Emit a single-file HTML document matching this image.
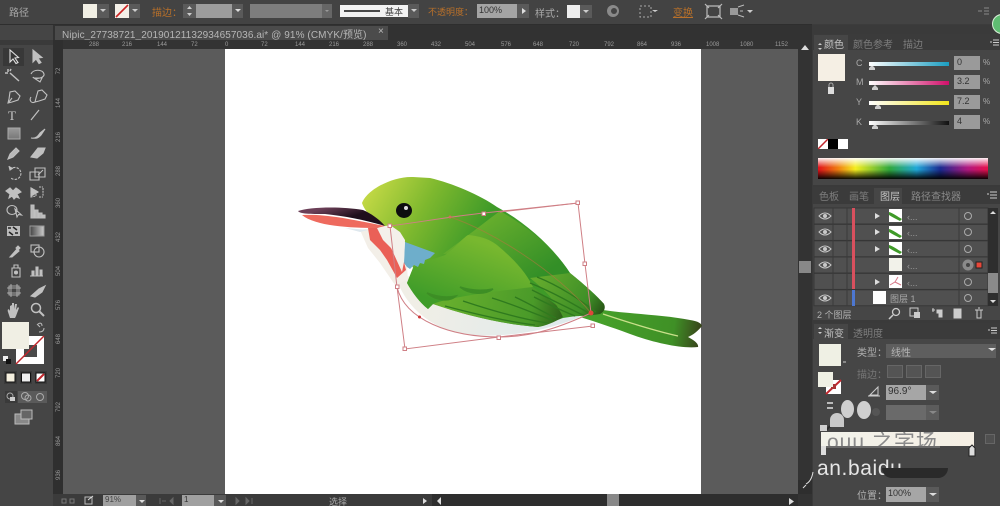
<!DOCTYPE html>
<html><head><meta charset="utf-8">
<style>
html,body{margin:0;padding:0;background:#3c3c3c}
#p{position:relative;width:1000px;height:506px;overflow:hidden;background:#3c3c3c;font-family:"Liberation Sans","Noto Sans CJK SC",sans-serif;font-size:10px;color:#b0b0b0;filter:blur(.35px)}
#p div{position:absolute;box-sizing:border-box}
#p span{position:absolute;white-space:nowrap}
.o{color:#b8702a}
.f{background:#9a9a9a;color:#333}
.rl{color:#9a9a9a;font-size:6px;top:42px}
.vr{position:absolute;color:#999;font-size:6px;left:54px;transform:rotate(-90deg);transform-origin:center;width:10px;text-align:center}
</style></head><body><div id="p">

<!-- top bar -->
<div style="left:0;top:0;width:1000px;height:24px;background:#434343"></div>
<span style="left:9px;top:4px;font-size:10px;color:#a8a8a8">路径</span>
<div style="left:83px;top:4px;width:14px;height:14px;background:#f1efe4"></div>
<div style="left:97px;top:4px;width:12px;height:14px;background:#5a5a5a"></div>
<svg style="position:absolute;left:0;top:0" width="1000" height="24">
<path d="M100 9l3 3 3-3z" fill="#ccc"/>
<rect x="115" y="4" width="14" height="14" fill="#f4f0e8"/><path d="M116 17L128 5" stroke="#c22" stroke-width="1.6"/>
<rect x="129" y="4" width="11" height="14" fill="#5a5a5a"/><path d="M132 9l3 3 3-3z" fill="#ccc"/>
<rect x="183" y="4" width="13" height="14" fill="#5a5a5a"/><path d="M187 9l2.500-3 2.500 3zM187 13l2.500 3 2.500-3z" fill="#ccc"/>
<rect x="196" y="4" width="36" height="14" fill="#9c9c9c"/><rect x="232" y="4" width="11" height="14" fill="#5a5a5a"/><path d="M235 9l3 3 3-3z" fill="#ddd"/>
<rect x="250" y="4" width="72" height="14" fill="#7d7d7d"/><rect x="322" y="4" width="10" height="14" fill="#666"/><path d="M325 10l2 2 2-2z" fill="#999"/>
<rect x="340" y="5" width="68" height="12" fill="#f2f2f2"/><path d="M344 11h36" stroke="#111" stroke-width="1.600"/>
<rect x="408" y="4" width="11" height="14" fill="#5a5a5a"/><path d="M411 9l3 3 3-3z" fill="#ccc"/>
<rect x="477" y="4" width="40" height="14" fill="#a4a4a4"/><rect x="517" y="4" width="12" height="14" fill="#5a5a5a"/><path d="M522 8l4 3-4 3z" fill="#ddd"/>
<rect x="567" y="5" width="13" height="13" fill="#eee"/><rect x="580" y="5" width="12" height="13" fill="#5a5a5a"/><path d="M583 10l3 3 3-3z" fill="#ccc"/>
<circle cx="613" cy="11" r="6" fill="#8a8a8a"/><circle cx="614" cy="11" r="3" fill="#444"/>
<rect x="640" y="6" width="11" height="11" fill="none" stroke="#aaa" stroke-dasharray="2 2"/><path d="M652 10l3 2 3-2z" fill="#ccc"/>
<path d="M707 6h13v11h-13zM705 4l4 4M722 4l-4 4M705 19l4-4M722 19l-4-4" fill="none" stroke="#bbb" stroke-width="1.200"/>
<path d="M730 8h8v7h-8z" fill="#999"/><path d="M738 7l6-2M738 15l6 2M740 11h3" stroke="#bbb"/><path d="M747 10l3 3 3-3z" fill="#ccc"/>
<path d="M978 11h4M984 8h5M984 11h5M984 14h5" stroke="#888"/>
</svg>
<span class="o" style="left:152px;top:4px">描边：</span>
<span style="left:385px;top:5px;color:#444;font-size:9px">基本</span>
<span class="o" style="left:428px;top:5px;font-size:9px">不透明度：</span>
<span style="left:479px;top:5px;color:#333;font-size:9px">100%</span>
<span style="left:535px;top:5px;font-size:10px;color:#aaa">样式：</span>
<span class="o" style="left:673px;top:4px;text-decoration:underline">变换</span>

<!-- tab row -->
<div style="left:0;top:24px;width:812px;height:1px;background:#2e2e2e"></div>
<div style="left:53px;top:25px;width:759px;height:15px;background:#323232"></div>
<div style="left:55px;top:26px;width:333px;height:14px;background:#4b4b4b"></div>
<span style="left:62px;top:26px;font-size:10px;color:#b6b6b6;letter-spacing:.09px">Nipic_27738721_20190121132934657036.ai* @ 91% (CMYK/预览)</span>
<span style="left:378px;top:26px;font-size:10px;color:#bbb">×</span>

<!-- rulers -->
<div style="left:53px;top:40px;width:745px;height:9px;background:#333"></div>
<div style="left:53px;top:40px;width:10px;height:454px;background:#2f2f2f"></div>
<span class="rl" style="left:89px">288</span><span class="rl" style="left:122px">216</span><span class="rl" style="left:157px">144</span><span class="rl" style="left:191px">72</span><span class="rl" style="left:225px">0</span><span class="rl" style="left:261px">72</span><span class="rl" style="left:295px">144</span><span class="rl" style="left:329px">216</span><span class="rl" style="left:363px">288</span><span class="rl" style="left:397px">360</span><span class="rl" style="left:431px">432</span><span class="rl" style="left:465px">504</span><span class="rl" style="left:501px">576</span><span class="rl" style="left:533px">648</span><span class="rl" style="left:569px">720</span><span class="rl" style="left:604px">792</span><span class="rl" style="left:637px">864</span><span class="rl" style="left:671px">936</span><span class="rl" style="left:706px">1008</span><span class="rl" style="left:740px">1080</span><span class="rl" style="left:775px">1152</span>
<span class="vr" style="top:68px">72</span><span class="vr" style="top:100px">144</span><span class="vr" style="top:134px">216</span><span class="vr" style="top:168px">288</span><span class="vr" style="top:200px">360</span><span class="vr" style="top:234px">432</span><span class="vr" style="top:268px">504</span><span class="vr" style="top:302px">576</span><span class="vr" style="top:336px">648</span><span class="vr" style="top:370px">720</span><span class="vr" style="top:404px">792</span><span class="vr" style="top:438px">864</span><span class="vr" style="top:472px">936</span>

<!-- canvas -->
<div style="left:63px;top:49px;width:735px;height:445px;background:#5b5b5b"></div>
<div style="left:225px;top:49px;width:476px;height:445px;background:#fff"></div>

<!-- bird -->
<svg style="position:absolute;left:0;top:0" width="1000" height="506">
<defs>
<linearGradient id="gh" x1="365" y1="190" x2="470" y2="250" gradientUnits="userSpaceOnUse"><stop offset="0" stop-color="#c6da46"/><stop offset=".5" stop-color="#7db82e"/><stop offset="1" stop-color="#3e9a28"/></linearGradient>
<linearGradient id="gw" x1="470" y1="238" x2="445" y2="305" gradientUnits="userSpaceOnUse"><stop offset="0" stop-color="#78b82f"/><stop offset="1" stop-color="#3f9c29"/></linearGradient>
<linearGradient id="gb" x1="490" y1="215" x2="535" y2="280" gradientUnits="userSpaceOnUse"><stop offset="0" stop-color="#67ae2d"/><stop offset="1" stop-color="#338f27"/></linearGradient>
<linearGradient id="gf" x1="450" y1="295" x2="565" y2="322" gradientUnits="userSpaceOnUse"><stop offset="0" stop-color="#66ae2d"/><stop offset=".7" stop-color="#4a9a29"/><stop offset="1" stop-color="#2a5a17"/></linearGradient>
<linearGradient id="gf2" x1="540" y1="275" x2="605" y2="315" gradientUnits="userSpaceOnUse"><stop offset="0" stop-color="#64aa2d"/><stop offset=".7" stop-color="#3e8f27"/><stop offset="1" stop-color="#244a13"/></linearGradient>
<linearGradient id="gt" x1="600" y1="320" x2="702" y2="335" gradientUnits="userSpaceOnUse"><stop offset="0" stop-color="#46a02a"/><stop offset=".72" stop-color="#3f9026"/><stop offset="1" stop-color="#38401a"/></linearGradient>
<linearGradient id="gbk" x1="330" y1="206" x2="335" y2="222" gradientUnits="userSpaceOnUse"><stop offset="0" stop-color="#6b3f57"/><stop offset="1" stop-color="#1f0f1c"/></linearGradient>
<linearGradient id="gbelly" x1="420" y1="300" x2="560" y2="330" gradientUnits="userSpaceOnUse"><stop offset="0" stop-color="#f0eee6"/><stop offset="1" stop-color="#dfeaec"/></linearGradient>
</defs>
<!-- tail -->
<path d="M603 310C630 314 665 315 690 320C698 321 702 324 702 326C698 331 693 335 688 337C694 340 699 344 698 347C680 349 650 342 622 331C605 325 590 320 580 317Z" fill="url(#gt)"/>
<path d="M603 314C630 323 660 332 678 336" stroke="#c9e08a" stroke-width="1.200" fill="none"/>
<!-- belly -->
<path d="M395 275C403 300 420 320 450 331C480 340 535 336 580 317L560 300L440 280Z" fill="url(#gbelly)"/>
<!-- chest -->
<path d="M360 230L377 227L405 240L408 280L395 285L380 263L368 248Z" fill="#f3efe8"/>
<!-- silhouette -->
<path d="M362 203C368 188 395 176 413 177L430 178C452 183 480 195 497 207C530 225 555 250 570 273C585 285 598 297 604 304L603 312L563 318L538 327C500 324 465 315 433 304L428 309C420 303 412 292 407 283L413 268L405 242L385 226C375 222 365 212 362 203Z" fill="url(#gh)"/>
<!-- back -->
<path d="M443 254C465 238 485 222 500 211C530 228 555 250 570 273L530 280L490 250Z" fill="url(#gb)"/>
<!-- covert -->
<path d="M413 268C420 262 438 258 445 255C455 248 463 238 468 235C478 236 488 238 497 245C510 256 525 270 533 287L540 300L433 304L428 309C420 303 412 292 407 283Z" fill="url(#gw)"/>
<!-- secondaries -->
<path d="M433 304C450 297 490 292 533 287L560 308L563 317C555 322 545 326 538 327C500 324 465 315 433 304Z" fill="url(#gf)"/>
<path d="M530 278L570 273C585 285 598 297 604 304C606 308 604 312 600 314C590 316 575 316 563 317C555 300 545 290 530 278Z" fill="url(#gf2)"/>
<g fill="none" stroke="#2f7a1e" stroke-width="1.300">
<path d="M445 306C475 314 510 322 535 325M463 301C490 310 520 319 548 323M492 298C515 305 535 314 552 320M515 297C530 304 545 313 556 318"/>
<path d="M537 277C560 286 580 300 596 312M530 283C555 293 575 305 592 315M532 290C550 299 570 309 585 316M534 297C548 304 565 312 575 316"/>
</g>
<path d="M427 293C436 301 450 302 456 296C447 298 437 297 427 293ZM460 287C470 295 485 295 493 289C483 291 472 291 460 287Z" fill="#3d8e25" stroke="#3d8e25" stroke-width="1.500"/>
<!-- blue -->
<path d="M405 242L435 253L430 258L425 260L424 264L420 263L418 267L414 265L410 269L407 267L404 263Z" fill="#6eaecb"/>
<!-- red throat -->
<path d="M368 228L377 227L383 230L392 250L402 272L404 262L406 270L397 278L387 260L380 250L370 240Z" fill="#ea6057"/>
<path d="M377 228L390 225L400 232L405 240L404 260L402 268L393 250L383 240Z" fill="#f4f0ea"/>
<!-- beak -->
<path d="M302 215C325 214 345 218 385 226L377 228C350 228 315 226 302 215Z" fill="#ee6a5e"/>
<path d="M298 211C310 207 340 206 363 210C372 214 380 220 385 226C365 220 345 216 325 214C310 214 300 214 298 211Z" fill="url(#gbk)"/>
<path d="M345 228L368 230L360 232Z" fill="#dfe8ee"/>
<!-- eye -->
<ellipse cx="404" cy="210.500" rx="8" ry="7.500" fill="#0d0d0f"/><circle cx="406" cy="208" r="2" fill="#ddd"/>
<!-- path handles -->
<g fill="none" stroke="#cf7f85" stroke-width="1">
<path d="M390 226L397 287L405 349L499 337L593 326"/>
<path d="M500 212L578 203L585 264L591 313"/>
<path d="M390 226C420 222 455 216 484 213L578 203"/>
<path d="M397 287C405 320 450 337 500 337C535 337 565 325 591 313"/>
<path d="M450 217C490 230 555 270 591 313" stroke="#b8743f" opacity=".55"/>
</g>
<g fill="#fff" stroke="#cf7f85" stroke-width="1">
<rect x="388" y="224" width="3.500" height="3.500"/><rect x="395.500" y="285" width="3.500" height="3.500"/><rect x="403" y="347" width="3.500" height="3.500"/><rect x="497" y="336" width="3.500" height="3.500"/><rect x="591" y="324" width="3.500" height="3.500"/><rect x="576" y="201" width="3.500" height="3.500"/><rect x="583" y="262" width="3.500" height="3.500"/><rect x="482" y="212" width="3.500" height="3.500"/>
</g>
<circle cx="419.500" cy="317" r="1.500" fill="#c33"/><circle cx="591" cy="313" r="2.500" fill="#e0473a"/><circle cx="450" cy="217" r="1.500" fill="#d0705c"/>
</svg>

<!-- left toolbar -->
<div style="left:0;top:25px;width:53px;height:481px;background:#454545"></div>
<div style="left:0;top:40px;width:53px;height:5px;background:#3a3a3a"></div>
<div style="left:3px;top:48px;width:21px;height:18px;background:#383838"></div>
<svg style="position:absolute;left:0;top:0" width="53" height="506">
<g fill="none" stroke="#c0c0c0" stroke-width="1.100">
<path d="M10 50v12l3-3 3 4.500 2-1-3-4.500 3.500-.5z" stroke="#e0e0e0"/>
<path d="M33 50v12l3-3 3 4.500 2-1-3-4.500 4-.5z" fill="#c0c0c0"/>
<path d="M10 73l9 8M8 69v3M5 73h3M11 69l-1 2" stroke-width="1.500"/>
<path d="M31 74c2-5 12-5 13 0c1 4-9 6-11 3M34 78l8 0l-2 4z"/>
<path d="M10 92l-1 7-1 4 4-1 6-2 2-4-5-5zM9 102l3-4"/>
<path d="M38 91l-2 7-1 4 4-1 6-2 2-4-5-5zM35 102c-4 2-6-2-4-5"/>
<path d="M39 110L31 120" stroke-width="1.200"/>
<path d="M31 138c5 1 7-2 9-5l5-4-4 6c-2 2-3 4-10 3z" fill="#c0c0c0"/>
<path d="M8 159l2-5 6-6 3 3-6 6z" fill="#b8b8b8"/>
<path d="M31 157l7-9h7l-2 5-6 5z" fill="#c0c0c0"/>
<path d="M10 170a6 6 0 1 1 1 8" stroke-dasharray="2.500 1.200"/><path d="M9 166l1 4 3-2" fill="#c0c0c0"/>
<path d="M30 172h9v8h-9zM35 168h10v9H35z"/><path d="M38 175l5-5" />
<path d="M6 191l4-3 3 3 3-3 3 2 2 2-4 2 2 4-3-1-2 2-2-3-3 2 1-4z" fill="#c0c0c0"/>
<path d="M31 188l7 4-2 1 0 3-5 1zM39 187h4M39 197h4M43 188v8" stroke-dasharray="2 .8"/><path d="M31 188l7 4-7 4z" fill="#c0c0c0"/>
<path d="M7 210a5 4.500 0 0 1 10 0a5 4.500 0 0 1-10 0M15 209l2 8 1.500-2.500 3 .5z"/>
<path d="M31 205h3v13h-3zM35 210h3v8h-3zM39 213h3v5h-3zM43 215h2v3h-2z" fill="#b8b8b8"/>
<path d="M10 257l7-8 2 2-7 6zM16 248l2-2 2 2-2 2z" fill="#c0c0c0"/>
<rect x="31" y="245" width="8" height="7"/><circle cx="39" cy="252" r="5"/>
<path d="M12 268h8v9h-8zM14 265h4v3h-4z"/><circle cx="16" cy="272.500" r="1.500" fill="#c0c0c0"/>
<path d="M30 276h13M32 276v-5h2v5M36 276v-9h2v9M40 276v-6h2v6" fill="#c0c0c0"/>
<path d="M9 286h10v9H9zM7 288h14M7 293h14M11 284v13M17 284v13" stroke-width=".8"/>
<path d="M31 296l8-7 6-3-3 6-7 5z" fill="#c0c0c0"/>
<circle cx="36" cy="308" r="4.500" stroke-width="1.500"/><path d="M39 311l5 5" stroke-width="2"/>
</g>
<text x="8" y="120" font-family="Liberation Serif,serif" font-size="13" fill="#c8c8c8">T</text>
<defs><linearGradient id="rg" x1="0" y1="0" x2="0" y2="1"><stop offset="0" stop-color="#9a9a9a"/><stop offset="1" stop-color="#777"/></linearGradient></defs>
<rect x="8" y="128" width="12" height="11" fill="url(#rg)" stroke="#aaa"/>
<path d="M8 312c-1-3 1-4 2-1l0-5 2-1 0 5 0-7 2 0 0 6 1-5 2 0-1 6 2-3 1 1-3 8-1 2h-5z" fill="#c0c0c0"/>
<rect x="7" y="226" width="13" height="10" fill="#bbb"/><path d="M8 228h3M13 227l4 3M9 232l4 3M15 233h3" stroke="#222" stroke-width="1.500"/>
<defs><linearGradient id="hg"><stop offset="0" stop-color="#444"/><stop offset="1" stop-color="#ccc"/></linearGradient></defs>
<rect x="30" y="226" width="14" height="10" fill="url(#hg)" stroke="#999"/>
<path d="M37 325c3-3 5-2 5 1M38 325l2 2M44 328c0 3-2 4-5 4" fill="none" stroke="#bbb"/>
<rect x="16" y="336" width="28" height="28" fill="#fff"/><rect x="24" y="345" width="13" height="12" fill="#4a4a4a"/>
<rect x="2" y="322" width="27" height="27" fill="#f0efe4"/>
<path d="M16 364L44 336" stroke="#c1272d" stroke-width="1.500"/>
<rect x="3" y="356" width="5" height="5" fill="#eee"/><rect x="6" y="359" width="5" height="5" fill="#111"/>
<rect x="4" y="371" width="13" height="13" fill="#3a3a3a"/><rect x="20" y="371" width="12" height="13" fill="#3a3a3a"/><rect x="35" y="371" width="12" height="13" fill="#3a3a3a"/>
<rect x="6" y="373" width="9" height="9" fill="#f5f0df" stroke="#111"/><rect x="21.500" y="373" width="9" height="9" fill="#eee" stroke="#111"/><rect x="36" y="373" width="9" height="9" fill="#fff" stroke="#111"/><path d="M37 381l7-7" stroke="#c1272d" stroke-width="2"/>
<rect x="5" y="391" width="12" height="12" fill="#3a3a3a"/><rect x="18" y="391" width="29" height="12" fill="#5a5a5a"/>
<circle cx="10" cy="396" r="3" fill="none" stroke="#aaa"/><rect x="10" y="397" width="5" height="4" fill="#ccc"/>
<circle cx="25" cy="396" r="3.500" fill="none" stroke="#aaa"/><circle cx="28" cy="398" r="3" fill="none" stroke="#aaa"/><circle cx="40" cy="397" r="3.500" fill="none" stroke="#aaa"/>
<rect x="15" y="414" width="14" height="10" fill="#888" stroke="#bbb"/><rect x="21" y="410" width="11" height="9" fill="#666" stroke="#bbb"/>
</svg>

<!-- bottom status -->
<div style="left:53px;top:494px;width:759px;height:12px;background:#3b3b3b"></div>
<div style="left:103px;top:495px;width:33px;height:11px;background:#a0a0a0"></div>
<div style="left:136px;top:495px;width:10px;height:11px;background:#595959"></div>
<div style="left:182px;top:495px;width:32px;height:11px;background:#a0a0a0"></div>
<div style="left:214px;top:495px;width:12px;height:11px;background:#595959"></div>
<span style="left:105px;top:495px;color:#444;font-size:8px">91%</span>
<span style="left:184px;top:495px;color:#333;font-size:8px">1</span>
<span style="left:329px;top:495px;color:#aaa;font-size:9px">选择</span>
<div style="left:432px;top:494px;width:366px;height:12px;background:#2e2e2e"></div>
<div style="left:607px;top:494px;width:12px;height:12px;background:#888"></div>
<svg style="position:absolute;left:0;top:490px" width="812" height="16">
<path d="M62 9h4v4h-4zM70 9h4v4h-4z" fill="none" stroke="#777"/><path d="M85 7h7v7h-7z" fill="none" stroke="#bbb"/><path d="M88 10l5-4" stroke="#ddd"/>
<path d="M139 10l3 3 3-3z" fill="#ddd"/><path d="M218 10l3 3 3-3z" fill="#ddd"/>
<path d="M160 8v6M166 11l-4 0M173 8l-3 3 3 3z" stroke="#666" fill="#666"/>
<path d="M236 8l3 3-3 3zM246 8l3 3-3 3zM252 8v6" stroke="#666" fill="#666"/>
<path d="M423 8l4 3-4 3zM441 7l-4 4 4 4z" fill="#ddd"/><path d="M789 8l5 3.500-5 3.500z" fill="#ddd"/>
</svg>

<!-- v scrollbar -->
<div style="left:798px;top:40px;width:14px;height:466px;background:#333"></div>
<div style="left:799px;top:261px;width:12px;height:12px;background:#888"></div>
<svg style="position:absolute;left:798px;top:40px" width="14" height="12"><path d="M3 10l4-5 4 5z" fill="#ddd"/></svg>
<div style="left:798px;top:480px;width:14px;height:14px;background:#2e2e2e"></div>

<!-- right panels -->
<div style="left:812px;top:25px;width:188px;height:481px;background:#3a3a3a"></div>
<div style="left:992px;top:14px;width:20px;height:20px;border-radius:50%;background:#5fbd72;border:1px solid #d8efd8"></div>
<div style="left:813px;top:34px;width:187px;height:151px;background:#464646"></div>
<div style="left:813px;top:34px;width:187px;height:16px;background:#3b3b3b"></div>
<div style="left:814px;top:35px;width:34px;height:15px;background:#464646"></div>
<span style="left:824px;top:36px;font-size:10px;color:#c4c4c4">颜色</span>
<span style="left:853px;top:36px;font-size:10px;color:#7e7e7e">颜色参考</span>
<span style="left:903px;top:36px;font-size:10px;color:#7e7e7e">描边</span>
<div style="left:818px;top:54px;width:27px;height:27px;background:#f5efe4"></div>
<svg style="position:absolute;left:812px;top:30px" width="188" height="160">
<path d="M6 15l2-2 2 2zM6 18l2 2 2-2z" fill="#ccc"/>
<path d="M178 12h2M181 10h6M181 12.500h6M181 15h6" stroke="#ccc"/>
<rect x="16" y="57" width="6" height="7" fill="#ddd"/><path d="M17 57v-2a2 2 0 0 1 4 0v2" fill="none" stroke="#aaa"/>
<path d="M57 38l3-3 3 3v2h-6zM60 58l3-3 3 3v2h-6zM63 77l3-3 3 3v2h-6zM60 97l3-3 3 3v2h-6z" fill="#ccc"/>
</svg>
<div style="left:869px;top:62px;width:80px;height:4px;background:linear-gradient(90deg,#fff,#1a9dc0)"></div>
<div style="left:869px;top:81px;width:80px;height:4px;background:linear-gradient(90deg,#fff,#d0106a)"></div>
<div style="left:869px;top:101px;width:80px;height:4px;background:linear-gradient(90deg,#fff,#f2e51a)"></div>
<div style="left:869px;top:121px;width:80px;height:4px;background:linear-gradient(90deg,#fff,#111)"></div>
<span style="left:856px;top:58px;font-size:9px;color:#aaa">C</span><span style="left:856px;top:77px;font-size:9px;color:#aaa">M</span><span style="left:856px;top:97px;font-size:9px;color:#aaa">Y</span><span style="left:856px;top:117px;font-size:9px;color:#aaa">K</span>
<div class="f" style="left:954px;top:56px;width:26px;height:14px;font-size:9px;padding:1px 3px">0</div>
<div class="f" style="left:954px;top:75px;width:26px;height:14px;font-size:9px;padding:1px 3px">3.2</div>
<div class="f" style="left:954px;top:95px;width:26px;height:14px;font-size:9px;padding:1px 3px">7.2</div>
<div class="f" style="left:954px;top:115px;width:26px;height:14px;font-size:9px;padding:1px 3px">4</div>
<span style="left:983px;top:58px;font-size:8px;color:#aaa">%</span><span style="left:983px;top:77px;font-size:8px;color:#aaa">%</span><span style="left:983px;top:97px;font-size:8px;color:#aaa">%</span><span style="left:983px;top:117px;font-size:8px;color:#aaa">%</span>
<svg style="position:absolute;left:818px;top:139px" width="32" height="10"><rect width="10" height="10" fill="#fff"/><path d="M0 10L10 0" stroke="#c1272d" stroke-width="1.500"/><rect x="10" width="10" height="10" fill="#000"/><rect x="20" width="10" height="10" fill="#fff"/></svg>
<div style="left:818px;top:158px;width:170px;height:21px;background:linear-gradient(180deg,rgba(255,255,255,.95) 0,rgba(255,255,255,0) 45%,rgba(0,0,0,0) 55%,rgba(0,0,0,.95) 100%),linear-gradient(90deg,#e0101a 0,#f08010 12%,#f4ee20 22%,#30a83c 42%,#20a8d8 58%,#1a2a90 72%,#b01880 88%,#e8104a 100%)"></div>

<!-- layers -->
<div style="left:813px;top:187px;width:187px;height:133px;background:#464646"></div>
<div style="left:813px;top:187px;width:187px;height:17px;background:#3b3b3b"></div>
<div style="left:874px;top:188px;width:28px;height:16px;background:#464646"></div>
<span style="left:819px;top:188px;font-size:10px;color:#7e7e7e">色板</span>
<span style="left:849px;top:188px;font-size:10px;color:#7e7e7e">画笔</span>
<span style="left:880px;top:188px;font-size:10px;color:#c4c4c4">图层</span>
<span style="left:911px;top:188px;font-size:10px;color:#8a8a8a">路径查找器</span>
<svg style="position:absolute;left:813px;top:207px" width="187" height="100">
<g fill="#505050" stroke="#373737" stroke-width="1">
<rect x="1" y="1" width="174" height="16"/><rect x="1" y="17.400" width="174" height="16"/><rect x="1" y="33.800" width="174" height="16"/><rect x="1" y="50" width="174" height="16"/><rect x="1" y="66.400" width="174" height="16"/><rect x="1" y="82.800" width="174" height="16"/>
</g>
<path d="M20 1v98M34 1v98M146 1v98" stroke="#3a3a3a"/>
<rect x="175" y="1" width="10" height="98" fill="#2e2e2e"/><rect x="175" y="66" width="10" height="20" fill="#8a8a8a"/>
<path d="M177 7l3-3 3 3zM177 93l3 3 3-3z" fill="#ddd"/>
<g fill="none" stroke="#c8c8c8"><path d="M6 9c4-4 8-4 12 0c-4 4-8 4-12 0zM6 25c4-4 8-4 12 0c-4 4-8 4-12 0zM6 42c4-4 8-4 12 0c-4 4-8 4-12 0zM6 58c4-4 8-4 12 0c-4 4-8 4-12 0zM6 91c4-4 8-4 12 0c-4 4-8 4-12 0z"/></g>
<g fill="#c8c8c8"><circle cx="12" cy="9" r="2"/><circle cx="12" cy="25" r="2"/><circle cx="12" cy="42" r="2"/><circle cx="12" cy="58" r="2"/><circle cx="12" cy="91" r="2"/></g>
<rect x="39" y="1" width="3" height="81" fill="#d9505e"/><rect x="39" y="83" width="3" height="16" fill="#4d77d0"/>
<path d="M62 6l5 3-5 3zM62 22l5 3-5 3zM62 39l5 3-5 3zM62 72l5 3-5 3z" fill="#ddd"/>
<g><rect x="76" y="2" width="13" height="13" fill="#fff"/><path d="M76 5c4 1 9 5 13 7l-2 2c-4-2-8-4-11-6z" fill="#3f9a28"/>
<rect x="76" y="19" width="13" height="13" fill="#fff"/><path d="M76 22c4 1 9 5 13 7l-2 2c-4-2-8-4-11-6z" fill="#3f9a28"/>
<rect x="76" y="35" width="13" height="13" fill="#fff"/><path d="M76 38c4 1 9 5 13 7l-2 2c-4-2-8-4-11-6z" fill="#3f9a28"/>
<rect x="76" y="51" width="13" height="13" fill="#f2f2ea"/>
<rect x="76" y="68" width="13" height="13" fill="#fff"/><path d="M77 78l5-3 6 3M82 75l3-5" stroke="#d87a8a" fill="none"/>
<rect x="60" y="84" width="13" height="13" fill="#fff"/></g>
<g fill="none" stroke="#aaa"><circle cx="155" cy="9" r="3.500"/><circle cx="155" cy="25" r="3.500"/><circle cx="155" cy="42" r="3.500"/><circle cx="155" cy="75" r="3.500"/><circle cx="155" cy="91" r="3.500"/></g>
<circle cx="155" cy="58" r="5.500" fill="#8a8a8a"/><circle cx="155" cy="58" r="2" fill="#444"/>
<rect x="163" y="55" width="6" height="6" fill="#e8483a" stroke="#222"/>
</svg>
<span style="left:907px;top:212px;font-size:9px;color:#999">‹...</span><span style="left:907px;top:228px;font-size:9px;color:#999">‹...</span><span style="left:907px;top:245px;font-size:9px;color:#999">‹...</span><span style="left:907px;top:261px;font-size:9px;color:#999">‹...</span><span style="left:907px;top:278px;font-size:9px;color:#999">‹...</span>
<span style="left:890px;top:292px;font-size:9px;color:#aaa">图层 1</span>
<span style="left:817px;top:308px;font-size:9px;color:#b0b0b0">2 个图层</span>
<svg style="position:absolute;left:880px;top:306px" width="120" height="14">
<circle cx="16" cy="6" r="3.500" fill="none" stroke="#ccc" stroke-width="1.300"/><path d="M13 9l-4 4" stroke="#ccc" stroke-width="1.500"/>
<rect x="30" y="2" width="8" height="8" fill="none" stroke="#ccc"/><rect x="34" y="6" width="6" height="6" fill="#ccc"/>
<path d="M52 4h3M53 2v4M57 4h5v7h-3V7h-2z" stroke="#ccc" fill="#ccc"/>
<path d="M74 3h7v9h-7zM74 3l3 3v3" fill="#ccc" stroke="#ccc"/>
<path d="M95 4h8M97 4v8h4V4M98 2h2" fill="none" stroke="#ccc"/>
</svg>
<svg style="position:absolute;left:985px;top:188px" width="15" height="14"><path d="M2 6h2M5 4h7M5 7h7M5 10h7" stroke="#ccc"/></svg>

<!-- gradient panel -->
<div style="left:813px;top:323px;width:187px;height:183px;background:#464646"></div>
<div style="left:813px;top:323px;width:187px;height:16px;background:#3b3b3b"></div>
<div style="left:814px;top:324px;width:34px;height:15px;background:#464646"></div>
<span style="left:824px;top:325px;font-size:10px;color:#c4c4c4">渐变</span>
<span style="left:853px;top:325px;font-size:10px;color:#7e7e7e">透明度</span>
<svg style="position:absolute;left:812px;top:325px" width="188" height="14"><path d="M6 4l2-2 2 2zM6 7l2 2 2-2z" fill="#ccc"/><path d="M176 5h2M179 3h6M179 5.500h6M179 8h6" stroke="#ccc"/></svg>
<div style="left:819px;top:344px;width:22px;height:22px;background:#eff0e4"></div>
<span style="left:857px;top:344px;font-size:10px;color:#b0b0b0">类型：</span>
<div style="left:886px;top:344px;width:110px;height:14px;background:#5e5e5e"></div>
<span style="left:891px;top:344px;font-size:10px;color:#b5b5b5">线性</span>
<svg style="position:absolute;left:812px;top:340px" width="188" height="130">
<path d="M176 8l4 3 4-3z" fill="#ddd"/><path d="M31 22h3" stroke="#ccc"/>
<rect x="14" y="40" width="15" height="14" fill="#fff"/><path d="M14 54L29 40" stroke="#c1272d" stroke-width="2"/><rect x="19" y="44" width="5" height="5" fill="#a33"/>
<path d="M58 55l8-8v8zM56 56h12" fill="none" stroke="#ccc"/>
<path d="M15 63h6M15 68h6" stroke="#bbb" stroke-width="2"/>
<path d="M15 90a7 6 0 0 1 9 -4" stroke="#2a2a2a" stroke-width="2" fill="none"/>
</svg>
<span style="left:857px;top:366px;font-size:10px;color:#777">描边：</span>
<div style="left:887px;top:365px;width:16px;height:13px;background:#545454;border:1px solid #666"></div>
<div style="left:906px;top:365px;width:16px;height:13px;background:#545454;border:1px solid #666"></div>
<div style="left:925px;top:365px;width:16px;height:13px;background:#545454;border:1px solid #666"></div>
<div style="left:818px;top:372px;width:15px;height:15px;background:#eff0e4"></div>
<div style="left:886px;top:385px;width:40px;height:15px;background:#a6a6a6;color:#333;font-size:10px;padding:1px 2px">96.9°</div>
<div style="left:926px;top:385px;width:13px;height:15px;background:#5a5a5a"></div>
<div style="left:886px;top:405px;width:40px;height:15px;background:#6a6a6a"></div>
<div style="left:926px;top:405px;width:13px;height:15px;background:#5c5c5c"></div>
<svg style="position:absolute;left:926px;top:385px" width="14" height="40"><path d="M3 6l4 3 4-3z" fill="#ddd"/><path d="M3 26l4 3 4-3z" fill="#888"/></svg>
<!-- watermark blobs -->
<div style="left:841px;top:400px;width:13px;height:18px;background:#cfcfcf;border-radius:50%"></div>
<div style="left:857px;top:401px;width:14px;height:18px;background:#cfcfcf;border-radius:50%"></div>
<div style="left:872px;top:408px;width:8px;height:8px;background:#555;border-radius:50%"></div>
<div style="left:830px;top:413px;width:14px;height:14px;background:#c9c9c9;border-radius:50% 50% 0 0"></div>
<div style="left:820px;top:425px;width:7px;height:6px;background:#cfcfcf"></div>
<div style="left:821px;top:432px;width:153px;height:14px;background:linear-gradient(90deg,#f2f2ea,#f5efe4);overflow:hidden"><span style="left:6px;top:-6px;font-size:21px;color:#8a8a8a;letter-spacing:1px">ouu 之字场</span></div>
<div style="left:821px;top:446px;width:5px;height:9px;background:#ddd"></div>
<div style="left:826px;top:446px;width:114px;height:2px;background:#6a6a6a"></div>
<svg style="position:absolute;left:966px;top:444px" width="34" height="16"><path d="M3 4l3-3 3 3v8H3z" fill="#ddd" stroke="#222"/></svg>
<div style="left:985px;top:434px;width:10px;height:10px;border:1px solid #666;background:#505050"></div>
<span style="left:817px;top:457px;font-size:21px;color:#e6e6e6;letter-spacing:.6px;font-family:'Liberation Sans',sans-serif">an.baidu</span>
<div style="left:882px;top:468px;width:66px;height:10px;background:#2a2a2a;border-radius:0 0 40px 40px"></div>
<span style="left:857px;top:487px;font-size:10px;color:#b0b0b0">位置：</span>
<div style="left:886px;top:487px;width:40px;height:15px;background:#a6a6a6;color:#333;font-size:9px;padding:1px 2px">100%</div>
<div style="left:926px;top:487px;width:13px;height:15px;background:#5a5a5a"></div>
<svg style="position:absolute;left:926px;top:487px" width="14" height="15"><path d="M3 6l4 3 4-3z" fill="#ddd"/></svg>
<svg style="position:absolute;left:800px;top:470px" width="20" height="24"><path d="M3 18l3-3M6 14c4-2 6-6 7-12" stroke="#ddd" fill="none"/></svg>
</div></body></html>
